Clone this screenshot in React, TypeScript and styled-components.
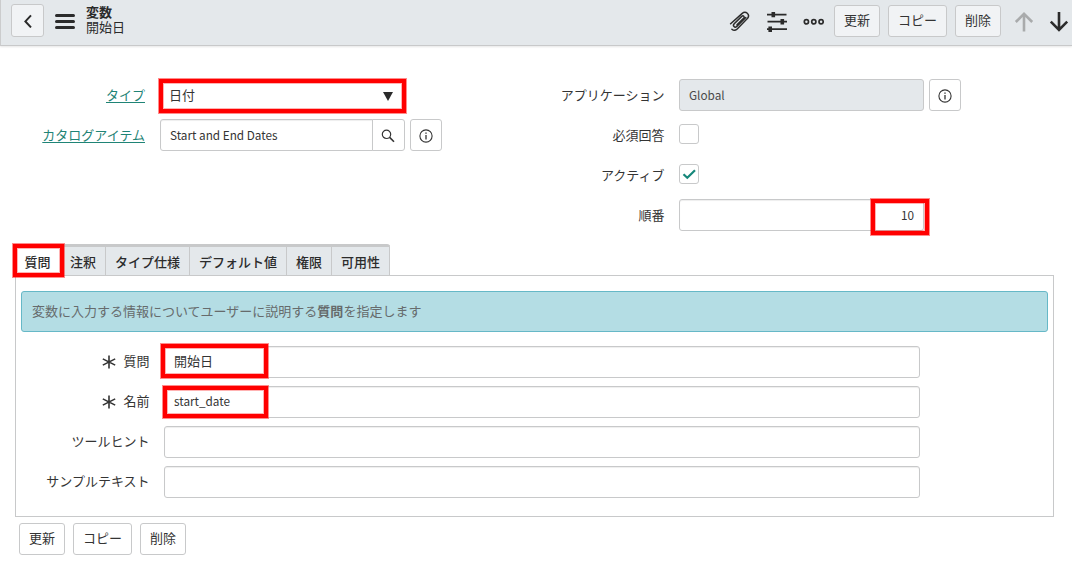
import React from "react";
import styled, { createGlobalStyle, css } from "styled-components";

const GlobalStyle = createGlobalStyle`
  *, *::before, *::after { box-sizing: border-box; }
  body {
    margin: 0;
    background: #fff;
    color: #343434;
    font-family: "Noto Sans CJK JP", sans-serif;
    font-size: 13px;
    line-height: 18px;
  }
`;

const Page = styled.div`
  width: 1072px;
  height: 568px;
  overflow: hidden;
`;

const Header = styled.header`
  display: flex;
  align-items: flex-start;
  height: 46px;
  padding: 4px 3px 0 10px;
  background: #e4e8eb;
  border-left: 1px solid #cbcccd;
  border-bottom: 1px solid #c8c9ca;
  box-shadow: 0 1px 2px rgba(0, 0, 0, 0.1);
`;

const Button = styled.button<{ $tinted?: boolean }>`
  height: 32px;
  padding: 0 9px 2px;
  border: 1px solid #c8c9ca;
  border-radius: 3px;
  background: ${(p) => (p.$tinted ? "#f1f3f5" : "#fff")};
  color: #343434;
  font: inherit;
  white-space: nowrap;
`;

const BackButton = styled(Button)`
  display: grid;
  place-items: center;
  width: 33px;
  height: 33px;
  padding: 0;
`;

const MenuIcon = styled.svg`
  margin: 10px 11px 0 11px;
`;

const Title = styled.div`
  flex: 1;
  line-height: 14px;
  padding-top: 1px;
  color: #2b2b2b;
`;

const TitleStrong = styled.div`
  margin-bottom: 1px;
  font-weight: 700;
`;

const Tools = styled.div`
  display: flex;
  align-items: center;
  padding-top: 1px;
`;

const Actions = styled.div`
  display: flex;
  gap: 8px;
  margin: 0 13px 0 10px;
`;

const ToolIcon = styled.svg<{ $gap?: number }>`
  display: block;
  margin-left: ${(p) => p.$gap ?? 0}px;
`;

const Columns = styled.section`
  display: grid;
  grid-template-columns: 534px 538px;
  padding-top: 33px;
  height: 198px;
`;

const Column = styled.div`
  display: flex;
  flex-direction: column;
  gap: 8px;
`;

const Row = styled.div<{ $label: number }>`
  display: grid;
  grid-template-columns: ${(p) => p.$label}px auto;
  column-gap: 15px;
  height: 32px;
`;

const labelText = css`
  justify-self: end;
  padding-top: 7px;
  white-space: nowrap;
`;

const Label = styled.label`
  ${labelText}
  margin-right: -0.5px;
`;

const LinkLabel = styled.a`
  ${labelText}
  color: #1f8476;
  text-decoration: underline;
  text-underline-offset: 2px;
`;

const Field = styled.div`
  position: relative;
  display: flex;
  align-items: flex-start;
`;

const box = css`
  height: 32px;
  border: 1px solid #c8c9ca;
  border-radius: 3px;
  background: #fff;
`;

const Input = styled.div<{ $width: number; $disabled?: boolean; $joined?: boolean; $right?: boolean }>`
  ${box}
  width: ${(p) => p.$width}px;
  padding: 6px 9px;
  white-space: nowrap;
  box-shadow: inset 0 1px 1px rgba(0, 0, 0, 0.07);
  ${(p) => p.$disabled && "background: #e4e8eb; color: #4a4a4a; box-shadow: none;"}
  ${(p) => p.$joined && "border-radius: 3px 0 0 3px;"}
  ${(p) => p.$right && "text-align: right;"}
`;

/* Latin glyphs of the CJK face run large, so they are set a little smaller */
const Latin = styled.span`
  font-size: 11.75px;
`;

const Select = styled.div`
  ${box}
  display: flex;
  justify-content: space-between;
  align-items: flex-start;
  width: 245px;
  padding: 6px 10px 0 8px;
`;

const IconButton = styled.button<{ $joined?: boolean }>`
  ${box}
  display: grid;
  place-items: center;
  width: 32px;
  padding: 2px 0 0;
  margin-left: 5px;
  ${(p) => p.$joined && "width: 33px; margin-left: -1px; padding-right: 2px; border-radius: 0 3px 3px 0;"}
`;

const Checkbox = styled.span`
  ${box}
  display: grid;
  place-items: center;
  width: 20px;
  height: 20px;
  margin-top: 5px;
`;

/* Red outline laid over the part that a step refers to */
const Highlight = styled.span<{ $left: number; $top: number; $w: number; $h: number }>`
  position: absolute;
  left: ${(p) => p.$left}px;
  top: ${(p) => p.$top}px;
  width: ${(p) => p.$w}px;
  height: ${(p) => p.$h}px;
  border: 4px solid #f00;
  box-shadow: 0 0 0 1px rgba(255, 0, 0, 0.45), inset 0 0 0 1px rgba(255, 0, 0, 0.3);
  z-index: 1;
`;

const Tabs = styled.nav`
  position: relative;
  display: flex;
  width: 375px;
  height: 31px;
  margin-left: 15px;
  border-top: 3px solid #c8c9ca;
  border-right: 1px solid #c8c9ca;
  border-radius: 3px 3px 0 0;
`;

const Tab = styled.div<{ $width: number; $active?: boolean }>`
  width: ${(p) => p.$width}px;
  padding-top: 6px;
  text-align: center;
  font-weight: 500;
  color: #2b2b2b;
  white-space: nowrap;
  background: ${(p) => (p.$active ? "#fff" : "#e4e8eb")};
  & + & { border-left: 1px solid #c8c9ca; }
`;

const Panel = styled.section`
  width: 1039px;
  height: 242px;
  margin-left: 15px;
  padding: 15px 5px 0;
  border: 1px solid #c8c9ca;
`;

const Notice = styled.p`
  height: 41px;
  margin: 0 0 14px;
  padding: 10px 10px;
  border: 1px solid #66b8c7;
  border-radius: 3px;
  background: #b4dde4;
  color: #666b6c;
`;

const Questions = styled(Column)`
  ${Label} { padding-top: 6px; }
  ${Input} { padding-top: 5px; }
`;

const Required = styled.svg`
  margin-right: 7px;
  vertical-align: -3px;
`;

const Footer = styled.footer`
  display: flex;
  gap: 8px;
  padding: 6px 0 0 19px;
`;

const actionNames = ["更新", "コピー", "削除"];

const InfoIcon = () => (
  <svg width="14" height="14" viewBox="0 0 14 14" fill="none" stroke="#343434">
    <circle cx="7" cy="7" r="6.1" strokeWidth="1.1" />
    <path d="M7 6v4.4" strokeWidth="1.3" />
    <path d="M7 3.4v1.4" strokeWidth="1.4" />
  </svg>
);

const SearchIcon = () => (
  <svg width="14" height="14" viewBox="0 0 14 14" fill="none" stroke="#343434">
    <circle cx="5.5" cy="5.3" r="4.2" strokeWidth="1.2" />
    <path d="M8.6 8.4l4.4 4.4" strokeWidth="1.6" />
  </svg>
);

const RequiredMark = () => (
  <Required width="14" height="14" viewBox="0 0 14 14" stroke="#343434" strokeWidth="1.6">
    <path d="M7 .5v13M.8 3.9l12.4 6.2M.8 10.1l12.4-6.2" />
  </Required>
);

const Arrow = ({ up, color, gap }: { up?: boolean; color: string; gap?: number }) => (
  <ToolIcon $gap={gap} width="20" height="22" viewBox="0 0 20 22" fill="none" stroke={color} strokeWidth="2.6">
    <path d={up ? "M10 21.5V4M1.8 12L10 3.8l8.2 8.2" : "M10 2v17.5M1.8 11.6l8.2 8.2 8.2-8.2"} />
  </ToolIcon>
);

export default function App() {
  return (
    <Page>
      <GlobalStyle />
      <Header>
        <BackButton $tinted aria-label="戻る">
          <svg width="10" height="14" viewBox="0 0 10 14" fill="none" stroke="#2b2b2b" strokeWidth="2">
            <path d="M8 1.4L2.4 7.4 8 13.4" />
          </svg>
        </BackButton>
        <MenuIcon width="20" height="16" viewBox="0 0 20 16" stroke="#2b2b2b" strokeWidth="3" strokeLinecap="round">
          <path d="M1.5 1.5h17M1.5 7.5h17M1.5 13.5h17" />
        </MenuIcon>
        <Title>
          <TitleStrong>変数</TitleStrong>
          <div>開始日</div>
        </Title>
        <Tools>
          <ToolIcon width="22" height="22" viewBox="0 0 22 22" fill="none" stroke="#2b2b2b" strokeWidth="1.5" strokeLinecap="round" strokeLinejoin="round">
            <path d="M8 14.7l6.6-6.4c1.5-1.6-.3-3.4-1.9-1.9l-7.5 7.3c-2 2.2.6 4.6 2.6 2.7l9-8.9" />
            <path d="M1.6 13.7L13 3.6c3.8-3.2 8.4.8 5.6 4.7L8.2 19c-1.8 1.6-4 1.4-5.3.2" />
          </ToolIcon>
          <ToolIcon $gap={16} width="20" height="22" viewBox="0 0 20 22" stroke="#2b2b2b" strokeWidth="1.8">
            <path d="M0 4.6h19.5M.5 11.7H20M0 19.2h20" />
            <path d="M6.3 1.9v5.4M15.3 9v5.4M3.2 16.5v5.4" strokeWidth="3.6" />
          </ToolIcon>
          <ToolIcon $gap={16} width="21" height="8" viewBox="0 0 21 8" fill="none" stroke="#2b2b2b" strokeWidth="1.7">
            <circle cx="3.4" cy="4.8" r="2.1" />
            <circle cx="10.8" cy="4.8" r="2.1" />
            <circle cx="18.1" cy="4.8" r="2.1" />
          </ToolIcon>
          <Actions>
            {actionNames.map((name) => (
              <Button $tinted key={name}>{name}</Button>
            ))}
          </Actions>
          <Arrow up color="#a9abac" />
          <Arrow color="#2b2b2b" gap={15} />
        </Tools>
      </Header>

      <Columns>
        <Column>
          <Row $label={145}>
            <LinkLabel>タイプ</LinkLabel>
            <Field>
              <Select>
                日付
                <svg width="12" height="18" viewBox="0 0 12 18" fill="#2b2b2b">
                  <path d="M1 6h10l-5 9z" />
                </svg>
              </Select>
              <Highlight $left={-1} $top={0} $w={247} $h={34} />
            </Field>
          </Row>
          <Row $label={145}>
            <LinkLabel>カタログアイテム</LinkLabel>
            <Field>
              <Input $width={213} $joined><Latin>Start and End Dates</Latin></Input>
              <IconButton $joined aria-label="検索"><SearchIcon /></IconButton>
              <IconButton aria-label="情報"><InfoIcon /></IconButton>
            </Field>
          </Row>
        </Column>
        <Column>
          <Row $label={130}>
            <Label>アプリケーション</Label>
            <Field>
              <Input $width={245} $disabled><Latin>Global</Latin></Input>
              <IconButton aria-label="情報"><InfoIcon /></IconButton>
            </Field>
          </Row>
          <Row $label={130}>
            <Label>必須回答</Label>
            <Field><Checkbox /></Field>
          </Row>
          <Row $label={130}>
            <Label>アクティブ</Label>
            <Field>
              <Checkbox>
                <svg width="14" height="12" viewBox="0 0 14 12" fill="none" stroke="#16877a" strokeWidth="2.2">
                  <path d="M1.5 6.2l3.8 3.6L13 2.2" />
                </svg>
              </Checkbox>
            </Field>
          </Row>
          <Row $label={130}>
            <Label>順番</Label>
            <Field>
              <Input $width={245} $right><Latin>10</Latin></Input>
              <Highlight $left={192} $top={0} $w={58} $h={36} />
            </Field>
          </Row>
        </Column>
      </Columns>

      <Tabs>
        <Tab $width={45} $active>質問</Tab>
        <Tab $width={45}>注釈</Tab>
        <Tab $width={84}>タイプ仕様</Tab>
        <Tab $width={97}>デフォルト値</Tab>
        <Tab $width={45}>権限</Tab>
        <Tab $width={58}>可用性</Tab>
        <Highlight $left={-2} $top={-3} $w={51} $h={33} />
      </Tabs>
      <Panel>
        <Notice>変数に入力する情報についてユーザーに説明する<b>質問</b>を指定します</Notice>
        <Questions>
          <Row $label={128}>
            <Label><RequiredMark />質問</Label>
            <Field>
              <Input $width={756}>開始日</Input>
              <Highlight $left={-3} $top={-2} $w={107} $h={34} />
            </Field>
          </Row>
          <Row $label={128}>
            <Label><RequiredMark />名前</Label>
            <Field>
              <Input $width={756}><Latin>start_date</Latin></Input>
              <Highlight $left={-1} $top={0} $w={105} $h={32} />
            </Field>
          </Row>
          <Row $label={128}>
            <Label>ツールヒント</Label>
            <Field><Input $width={756} /></Field>
          </Row>
          <Row $label={128}>
            <Label>サンプルテキスト</Label>
            <Field><Input $width={756} /></Field>
          </Row>
        </Questions>
      </Panel>
      <Footer>
        {actionNames.map((name) => (
          <Button key={name}>{name}</Button>
        ))}
      </Footer>
    </Page>
  );
}
